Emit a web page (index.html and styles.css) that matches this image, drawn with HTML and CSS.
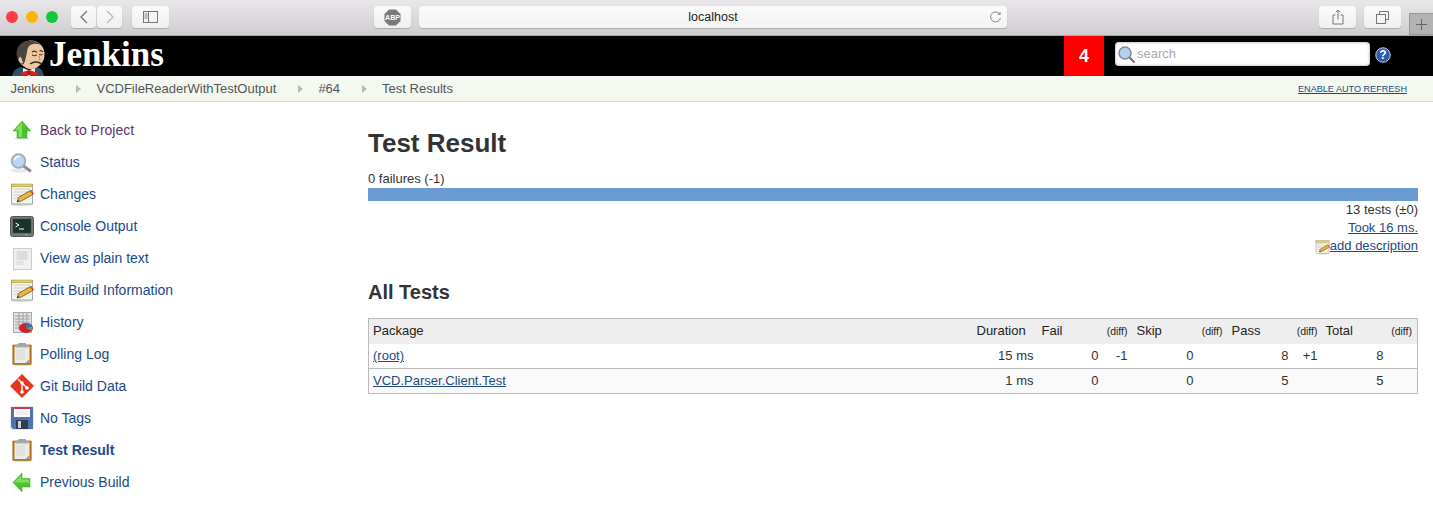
FILE: index.html
```html
<!DOCTYPE html>
<html lang="en">
<head>
<meta charset="utf-8">
<title>Test Result</title>
<link rel="stylesheet" href="styles.css">
</head>
<body>
<svg class="defs" width="0" height="0">
  <defs>
    <g id="notepad">
      <ellipse cx="12" cy="22.800" rx="11" ry="1" fill="#d8d8d8"/>
      <rect x="1.500" y="2.500" width="21" height="19.500" fill="#f4f4ef" stroke="#a9a9a0"/>
      <rect x="1.500" y="2" width="21" height="2.600" fill="#e6cf5e" stroke="#9c8a35" stroke-width=".5"/>
      <path d="M3.500 7h17M3.500 10h17M3.500 13h10M3.500 16h5" stroke="#cfcfc7"/>
      <path d="m7 20 1.800-4.800L20.500 8.500l2.500 3.800L11.200 19z" fill="#eab53c" stroke="#6f4a12" stroke-width=".8"/>
      <path d="m7 20 .8-2.300 1.500 1.400z" fill="#333"/>
      <path d="m20.500 8.500 2.500 3.800 1-.7-2.500-3.800z" fill="#d4483a"/>
    </g>
    <g id="clipboard">
      <ellipse cx="12" cy="23.300" rx="9" ry=".7" fill="#ddd"/>
      <rect x="2.800" y="3" width="18.400" height="19.500" fill="#b5761b" stroke="#a66a14" stroke-width=".6"/>
      <rect x="4.500" y="4.500" width="15" height="16.500" fill="#ececec"/>
      <rect x="5.500" y="2.500" width="13" height="3" rx="1" fill="#a9a9a9"/>
      <rect x="8" y="1" width="8" height="2.500" rx="1" fill="#a2a2a2"/>
      <rect x="6" y="7" width="9" height="11" fill="#e2e2e2"/>
      <path d="M19.500 21h-4l4-4z" fill="#a0a0a0"/>
    </g>
  </defs>
</svg>
<div class="chrome">
  <div class="lights"><span class="light red"></span><span class="light yellow"></span><span class="light green"></span></div>
  <div class="navpair">
    <button class="btn nav"><svg width="12" height="16" viewBox="0 0 12 16"><path d="M9 2 3 8l6 6" fill="none" stroke="#777" stroke-width="1.400"/></svg></button>
    <button class="btn nav"><svg width="12" height="16" viewBox="0 0 12 16"><path d="m3 2 6 6-6 6" fill="none" stroke="#bbb" stroke-width="1.400"/></svg></button>
  </div>
  <button class="btn wide side"><svg width="15" height="12" viewBox="0 0 15 12"><rect x=".5" y=".5" width="14" height="11" fill="none" stroke="#777"/><path d="M5.500 0v12M1.500 3h3M1.500 5h3M1.500 7h3" stroke="#777" fill="none"/></svg></button>
  <button class="btn wide abp"><svg width="17" height="17" viewBox="0 0 18 18"><path d="M5.300.5h7.400l4.800 4.800v7.400l-4.800 4.800H5.300L.5 12.700V5.300z" fill="#7a7a7a"/><text x="9" y="12" class="abp-text">ABP</text></svg></button>
  <div class="urlbar"><span class="url">localhost</span><svg class="reload" width="13" height="14" viewBox="0 0 13 14"><path d="M10.800 4.200A5 5 0 1 0 11.500 8" fill="none" stroke="#888"/><path d="m8.300 4.700 3.200.3.200-3.200z" fill="#888"/></svg></div>
  <button class="btn wide share"><svg width="12" height="16" viewBox="0 0 12 16"><path d="M3.500 6H1v9h10V6H8.500M6 10.500V1M3.800 3.200 6 1l2.200 2.200" fill="none" stroke="#777"/></svg></button>
  <button class="btn wide tabs"><svg width="13" height="13" viewBox="0 0 13 13"><path d="M3.500 3V.5h9v8H9.500" fill="none" stroke="#777"/><rect x=".5" y="3.500" width="9" height="9" fill="none" stroke="#777"/></svg></button>
  <div class="newtab"><svg width="11" height="11" viewBox="0 0 11 11"><path d="M5.500 0v11M0 5.500h11" stroke="#666" fill="none"/></svg></div>
</div>

<header class="topbar">
  <svg class="butler" width="33" height="36" viewBox="0 0 33 36">
    <path d="M0 36c1-5 4-8 9-9l8 3 8-3c4 1 6 4 7 9z" fill="#2e5166"/>
    <path d="M11 28l6 2.500 6-2.500v5l-6 3-6-3z" fill="#f2f2f2"/>
    <ellipse cx="19" cy="14.500" rx="13.500" ry="14" fill="#eec8a4"/>
    <path d="M13 27c3 3 9 3 13-1l1-6-14 2z" fill="#eec8a4"/>
    <path d="M5 17C3 9 8 1 17 .7c5-.2 9 1 12 4-6-2-11-1-13 3-1 2-1 6-2 9-1 3-1 6-3 8-3-1-5-4-6-8z" fill="#4b4541"/>
    <path d="M9 17c-2 0-3 2-2 4s3 3 4 2z" fill="#eec8a4"/>
    <path d="M20 12q3-2 5 .5M27.500 11q2-1 3.500 1" fill="none" stroke="#3a2b22" stroke-width="1.100"/>
    <path d="M20 15q3 1.500 5 0M27 14.500q2 .8 3.500 0" fill="none" stroke="#3a2b22"/>
    <path d="M18 24q5-3.500 10-1 1 1 2 0" fill="none" stroke="#3a2b22" stroke-width="1.500"/>
    <path d="M27 16q1 3 1 5" fill="none" stroke="#b78a68"/>
    <path d="M9 32.500 17 30l8 2.500V35H9z" fill="#d2232a"/>
    <rect x="15.300" y="31" width="3.400" height="4" fill="#a81a20"/>
  </svg>
  <span class="brand">Jenkins</span>
  <span class="spring"></span>
  <span class="badge">4</span>
  <div class="search">
    <svg width="19" height="19" viewBox="0 0 19 19"><circle cx="8" cy="8" r="6" fill="#b5d0ee" stroke="#7f8a94" stroke-width="1.500"/><path d="m12.500 12.500 5 5" stroke="#6f6f6f" stroke-width="2"/></svg>
    <span class="placeholder">search</span>
  </div>
  <svg class="help" width="16" height="16" viewBox="0 0 16 16"><circle cx="8" cy="8" r="7.200" fill="#2a5aa8" stroke="#c7d4ea"/><text x="8" y="12" class="help-text">?</text></svg>
</header>

<nav class="crumbs">
  <a class="crumb">Jenkins</a><i class="tri"></i>
  <a class="crumb">VCDFileReaderWithTestOutput</a><i class="tri"></i>
  <a class="crumb">#64</a><i class="tri"></i>
  <a class="crumb">Test Results</a>
  <span class="spring"></span>
  <a class="refresh">ENABLE AUTO REFRESH</a>
</nav>

<div class="page">
  <aside class="sidebar">
    <a class="task visited"><svg class="ico" viewBox="0 0 24 24"><ellipse cx="12" cy="20.500" rx="8" ry="1.200" fill="#ddd"/><path d="M12 3 21 13h-4v7H7v-7H3z" fill="#4cc22c" stroke="#39a822" stroke-width=".5"/><path d="M12 4 5 12h3.500v7H12z" fill="#83e05a"/></svg>Back to Project</a>
    <a class="task"><svg class="ico" viewBox="0 0 24 24"><ellipse cx="9" cy="20.500" rx="8" ry="2" fill="#e8e8e8"/><circle cx="8.500" cy="11" r="6.800" fill="#bcd6f2" stroke="#a3aab0" stroke-width="1.800"/><path d="M4.500 10a4.500 4.500 0 0 1 5-3.500" stroke="#fff" stroke-width="1.500" fill="none"/><path d="m13.500 16 7.500 5.500" stroke="#8b8f92" stroke-width="3"/></svg>Status</a>
    <a class="task"><svg class="ico" viewBox="0 0 24 24"><use href="#notepad"/></svg>Changes</a>
    <a class="task"><svg class="ico" viewBox="0 0 24 24"><rect x=".5" y="2.500" width="23" height="20" rx="2" fill="#777" stroke="#555"/><rect x="3" y="5" width="18" height="14" fill="#17342a" stroke="#444" stroke-width=".5"/><path d="m5.500 9 3.500 2-3.500 2" stroke="#fff" fill="none"/><path d="M9 15h5" stroke="#fff"/><circle cx="16" cy="20.700" r=".7" fill="#7f7"/></svg>Console Output</a>
    <a class="task"><svg class="ico" viewBox="0 0 24 24"><rect x="3.500" y="2.500" width="18" height="21" fill="#f0f0f0" stroke="#ccc"/><rect x="6.500" y="5" width="11" height="9" fill="#dcdcdc"/><rect x="6.500" y="15" width="7" height="4" fill="#e2e2e2"/></svg>View as plain text</a>
    <a class="task"><svg class="ico" viewBox="0 0 24 24"><use href="#notepad"/></svg>Edit Build Information</a>
    <a class="task"><svg class="ico" viewBox="0 0 24 24"><rect x="3.500" y="2.500" width="18" height="20" fill="#e4e4e4" stroke="#a8a8a8"/><path d="M5 6h15M5 9h15M5 12h15M5 15h7M5 18h7M9 3v17M13 3v12M17 3v8" stroke="#a0a0a0"/><ellipse cx="16" cy="18" rx="7" ry="5" fill="#d3202a"/><path d="M16 18v-5a7 5 0 0 1 6.500 3.500z" fill="#3b6fb5"/><path d="M16 18l6.500-1.500a7 5 0 0 1-1 4z" fill="#6aa84f"/></svg>History</a>
    <a class="task"><svg class="ico" viewBox="0 0 24 24"><use href="#clipboard"/></svg>Polling Log</a>
    <a class="task"><svg class="ico" viewBox="0 0 24 24"><path d="M12 0 24 12 12 24 0 12z" fill="#e8341c"/><path d="M8 5l4 4v8M12 9l4.500 4.500" stroke="#fff" stroke-width="1.400" fill="none"/><circle cx="12" cy="9" r="1.800" fill="#fff"/><circle cx="12" cy="18" r="1.800" fill="#fff"/><circle cx="17" cy="14" r="1.800" fill="#fff"/></svg>Git Build Data</a>
    <a class="task"><svg class="ico" viewBox="0 0 24 24"><rect width="24" height="24" fill="#ecedf0"/><path d="M1 1h22v22H3l-2-2z" fill="#4f74ad"/><rect x="4" y="1" width="16" height="10" fill="#fff"/><rect x="4" y="1" width="16" height="2" fill="#d93434"/><path d="M6 6h12M6 8h12" stroke="#ddd"/><rect x="6" y="14" width="12" height="9" fill="#333c4c"/><rect x="8" y="15" width="3" height="7" fill="#c9d2dd"/></svg>No Tags</a>
    <a class="task strong"><svg class="ico" viewBox="0 0 24 24"><use href="#clipboard"/></svg>Test Result</a>
    <a class="task"><svg class="ico" viewBox="0 0 24 24"><path d="M3 12.500 12 3v5.500h8V17h-8v5z" fill="#4cc22c" stroke="#39a822" stroke-width=".5"/><path d="M4.500 12.500 11 5.500v4h8v3z" fill="#83e05a"/></svg>Previous Build</a>
  </aside>
  <main class="content">
    <h1 class="title">Test Result</h1>
    <div class="failures">0 failures (-1)</div>
    <div class="bar"></div>
    <div class="meta">13 tests (±0)</div>
    <div class="meta"><a class="link">Took 16 ms.</a></div>
    <div class="meta"><svg class="edit" width="15" height="16" viewBox="0 0 24 24"><use href="#notepad"/></svg><a class="link">add description</a></div>
    <h2 class="subtitle">All Tests</h2>
    <table class="results">
      <colgroup>
        <col class="c-pkg"><col class="c-dur"><col class="c-num"><col class="c-diff"><col class="c-num"><col class="c-diff"><col class="c-num"><col class="c-diff"><col class="c-num"><col class="c-diff">
      </colgroup>
      <thead>
        <tr><th>Package</th><th>Duration</th><th>Fail</th><th class="dh">(diff)</th><th>Skip</th><th class="dh">(diff)</th><th>Pass</th><th class="dh">(diff)</th><th class="shift-l">Total</th><th class="dh">(diff)</th></tr>
      </thead>
      <tbody>
        <tr><td class="pkg"><a class="link">(root)</a></td><td>15 ms</td><td>0</td><td class="dc">-1</td><td>0</td><td class="dc"></td><td>8</td><td class="dc">+1</td><td>8</td><td class="dc"></td></tr>
        <tr class="alt"><td class="pkg"><a class="link">VCD.Parser.Client.Test</a></td><td>1 ms</td><td>0</td><td class="dc"></td><td>0</td><td class="dc"></td><td>5</td><td class="dc"></td><td>5</td><td class="dc"></td></tr>
      </tbody>
    </table>
  </main>
</div>
</body>
</html>
```
FILE: styles.css
```css
* { box-sizing: border-box; }
html, body { margin: 0; height: 529px; overflow: hidden; background: #fff; }
body { font: 13px/18px "Liberation Sans", Arial, sans-serif; color: #333; }
a { text-decoration: none; }
svg { display: block; flex: none; }
.defs { position: absolute; }

.chrome {
  height: 36px; display: flex; align-items: flex-start; padding: 6px 0 0 6px;
  background: linear-gradient(#e9e7e9, #cfcdcf); border-bottom: 1px solid #a9a8a9;
}
.lights { display: flex; gap: 8px; margin-top: 5px; }
.light { width: 12px; height: 12px; border-radius: 50%; }
.red { background: #fc3d47; }
.yellow { background: #fdb500; }
.green { background: #12c93c; }
.btn {
  height: 22px; padding: 0; border: 0; border-radius: 4px; background: linear-gradient(#fbfbfb, #f0f0f0);
  box-shadow: 0 1px 1px #aaa; display: flex; align-items: center; justify-content: center;
}
.navpair { display: flex; gap: 1px; margin-left: 13px; }
.nav { width: 25px; }
.wide { width: 37px; }
.side { margin-left: 10px; }
.abp { margin-left: 205px; }
.abp-text { font: bold 7.500px "Liberation Sans", sans-serif; fill: #fff; text-anchor: middle; }
.urlbar {
  width: 588px; height: 22px; margin-left: 8px; position: relative; border-radius: 4px;
  background: linear-gradient(#fbfbfb, #f3f3f3); box-shadow: 0 1px 1px #aaa;
  display: flex; align-items: center; justify-content: center;
}
.url { font-size: 12.500px; color: #222; }
.reload { position: absolute; right: 5px; top: 4px; }
.share { margin-left: 312px; }
.tabs { margin-left: 8px; }
.newtab {
  width: 24px; height: 22px; margin: 7px 0 0 8px; flex: none; background: #b4b3b4;
  border: 1px solid #999; border-right: 0; display: flex; align-items: center; justify-content: center;
}

.topbar { height: 40px; background: #000; display: flex; align-items: center; padding-left: 12px; overflow: hidden; }
.butler { align-self: flex-end; }
.brand { font: bold 35px/40px "Liberation Serif", serif; color: #fff; margin: -2px 0 0 4px; }
.spring { flex: 1; }
.badge { width: 40px; height: 40px; background: #f00; color: #fff; font: bold 18px/40px "Liberation Sans", sans-serif; text-align: center; }
.search {
  width: 255px; height: 24px; margin: -4px 0 0 11px; background: #fff; border-radius: 4px;
  display: flex; align-items: center; padding-left: 2px; box-shadow: inset 0 0 3px #999;
}
.placeholder { color: #a9a9a9; font-size: 13px; margin-left: 1px; }
.help { margin: 0 42px 2px 5px; }
.help-text { font: bold 12px "Liberation Sans", sans-serif; fill: #fff; text-anchor: middle; }

.crumbs {
  height: 26px; background: #f3f8f1; border-bottom: 1px solid #d3d3d3; display: flex; align-items: center;
  padding: 0 26px 0 10.400px;
}
.crumb { color: #555; font-size: 13px; }
.tri { width: 0; height: 0; border-left: 5px solid #b5bab5; border-top: 4px solid transparent; border-bottom: 4px solid transparent; margin: 0 15px 0 22px; }
.refresh { color: #204a87; font-size: 9.100px; text-decoration: underline; }

.page { display: flex; }
.sidebar { width: 368px; padding: 12px 0 0 10px; flex: none; }
.task { display: flex; align-items: center; height: 32px; color: #204a87; font-size: 14px; }
.visited { color: #5c3566; }
.strong { font-weight: bold; }
.ico { width: 24px; height: 24px; margin-right: 6px; }

.content { flex: 1; padding-right: 15px; }
.title { margin: 26px 0 0; font: bold 26px/30px "Liberation Sans", sans-serif; color: #333; }
.failures { margin-top: 12px; height: 18px; }
.bar { height: 13px; background: #6a9cd1; }
.meta { display: flex; justify-content: flex-end; align-items: flex-end; height: 18px; line-height: 18px; }
.link { color: #204a87; text-decoration: underline; }
.subtitle { margin: 25px 0 0; font: bold 20px/24px "Liberation Sans", sans-serif; color: #333; }

.results { margin-top: 14px; width: 1050px; table-layout: fixed; border-collapse: collapse; border: 1px solid #bbb; }
.c-pkg { width: 604px; }
.c-dur { width: 65px; }
.c-num { width: 65px; }
.c-diff { width: 30px; }
th { height: 25px; padding: 0 4px; background: #eee; font-weight: normal; text-align: left; color: #222; white-space: nowrap; }
.dh { font-size: 10.500px; text-align: right; padding: 0 5px 0 0; }
th.shift-l { padding-left: 3px; }
td { height: 25px; padding: 0 4px 0 0; text-align: right; color: #333; border-bottom: 1px solid #bbb; white-space: nowrap; }
td.dc { padding-right: 5px; }
td.pkg { text-align: left; padding-left: 4px; }
.alt td { background: #fafafa; }
```
